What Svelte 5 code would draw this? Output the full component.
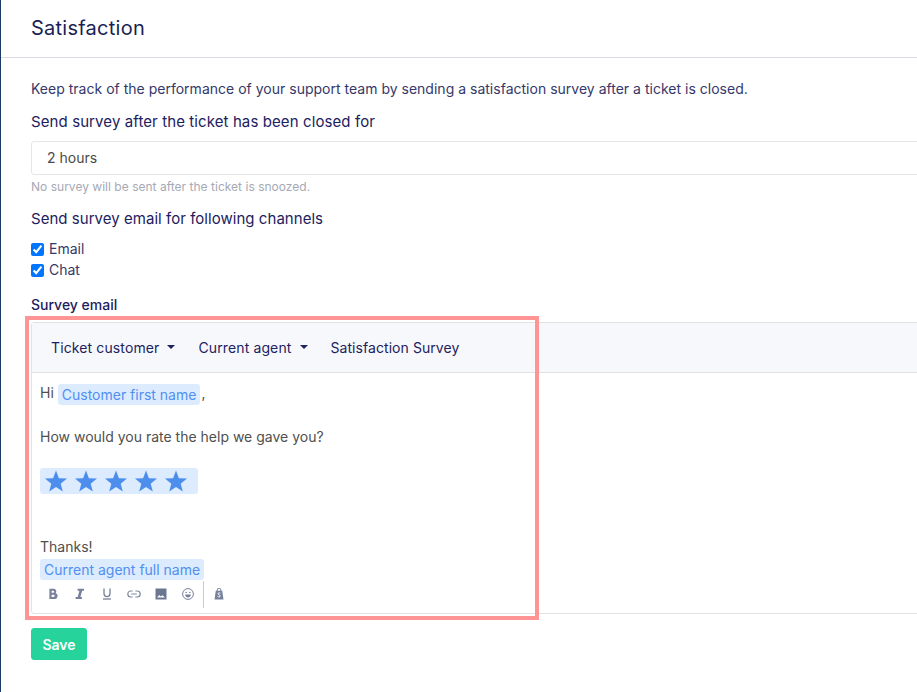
<script lang="ts">
  const channels = ['Email', 'Chat'];
  const stars = [1, 2, 3, 4, 5];
</script>

<div class="page">
  <header class="head"><h1>Satisfaction</h1></header>

  <main class="body">
    <p class="intro">Keep track of the performance of your support team by sending a satisfaction survey after a ticket is closed.</p>

    <div class="label first">Send survey after the ticket has been closed for</div>
    <div class="select">2 hours</div>
    <div class="hint">No survey will be sent after the ticket is snoozed.</div>

    <div class="label second">Send survey email for following channels</div>
    <div class="channels">
      {#each channels as c}
        <label class="check"><input type="checkbox" checked />{c}</label>
      {/each}
    </div>

    <div class="small-label">Survey email</div>

    <div class="editor-wrap">
      <div class="editor">
        <div class="toolbar">
          <span class="tab">Ticket customer<i class="caret"></i></span>
          <span class="tab">Current agent<i class="caret"></i></span>
          <span class="tab last">Satisfaction Survey</span>
        </div>
        <div class="content">
          <div class="line-hi">Hi <span class="tag hi-tag">Customer first name</span><span class="comma">,</span></div>
          <div class="line-q">How would you rate the help we gave you?</div>
          <div class="stars">
            {#each stars as s}
              <svg viewBox="0 0 24 24" width="24" height="24"><path d="M12 1.6l2.9 7.6 8.1.4-6.3 5.1 2.1 7.9L12 18.1l-6.8 4.5 2.1-7.9L1 9.6l8.1-.4z" fill="#4d8eed" /></svg>
            {/each}
          </div>
          <div class="thanks">Thanks!</div>
          <div class="line-agent"><span class="tag">Current agent full name</span></div>
          <div class="format">
            <svg class="fi" viewBox="0 0 12 12"><path d="M2.4 .8h4.2a2.6 2.6 0 0 1 1.9 4.5 2.9 2.9 0 0 1-1.5 5.6H2.4zM4.6 2.8v2h1.6a1 1 0 0 0 0-2zM4.6 6.7v2.2h2a1.1 1.1 0 0 0 0-2.2z" fill="#77819b" fill-rule="evenodd" /></svg>
            <svg class="fi" viewBox="0 0 12 12"><path d="M3.6 .8h6.4v2H8.1L6.4 9h1.5v2H1.6V9h2.1l1.7-6.2H3.6z" fill="#77819b" /></svg>
            <svg class="fi" viewBox="0 0 12 12"><path d="M3 .6v5a3 3 0 0 0 6 0v-5" fill="none" stroke="#77819b" stroke-width="1.3" /><path d="M2 11h8" stroke="#5f6a86" stroke-width="1.1" /></svg>
            <svg class="fi wide" viewBox="0 0 14 12"><path d="M5.6 3H3.8a3 3 0 0 0 0 6h1.8M8.4 3h1.8a3 3 0 0 1 0 6H8.4M4.2 6h5.6" fill="none" stroke="#7e88a0" stroke-width="1.2" /></svg>
            <svg class="fi" viewBox="0 0 12 12"><path d="M.5 .5h11v11H.5z" fill="#6b7690" /><path d="M2 9.6l2.3-2.6 1.6 1.5 1.5-1.3 2.6 2.4z" fill="#fff" /></svg>
            <svg class="fi" viewBox="0 0 12 12"><circle cx="6" cy="6" r="5.4" fill="none" stroke="#77819b" stroke-width="1" /><path d="M3.4 4.4h1.6M7 4.4h1.6" stroke="#77819b" stroke-width="1" /><path d="M3.2 6.6h5.6a2.8 2.8 0 0 1-5.6 0z" fill="#77819b" /></svg>
            <span class="sep"></span>
            <svg class="fi shop" viewBox="0 0 10 12"><path d="M1.8 2.8h6.4l1.3 8.7H.5z" fill="#77819b" /><path d="M3.2 3V2a1.8 1.8 0 0 1 3.6 0v1" fill="none" stroke="#77819b" stroke-width="1" /><path d="M6.4 5.2c-1-.7-2.4-.4-2.4.6 0 1.1 2.2 1 2.2 2.2 0 1-1.5 1.200-2.600.5" fill="none" stroke="#fff" stroke-width="1" /></svg>
          </div>
        </div>
      </div>
      <div class="highlight"></div>
    </div>

    <button class="save">Save</button>
  </main>
</div>

<style>
  :global(body) {
    margin: 0;
    background: #fff;
    overflow: hidden;
  }
  .page {
    width: 917px;
    height: 692px;
    box-sizing: border-box;
    border-left: 1px solid #1d3a63;
    font-family: Inter, 'Liberation Sans', sans-serif;
    color: #2a2a5e;
    overflow: hidden;
  }
  .head {
    height: 57px;
    box-sizing: content-box;
    border-bottom: 1px solid #d9dbe2;
    padding-left: 30px;
    display: flex;
    align-items: center;
  }
  h1 {
    margin: -1px 0 0;
    font-size: 20px;
    font-weight: 400;
    letter-spacing: 0.25px;
    color: #1a1f55;
  }
  .body {
    padding: 0 0 0 30px;
  }
  .intro {
    margin: 23px 0 0;
    font-size: 14px;
    line-height: 16px;
    letter-spacing: 0.01px;
    color: #34386a;
    white-space: nowrap;
  }
  .label {
    font-size: 15px;
    line-height: 18px;
    color: #1c2160;
  }
  .first {
    margin-top: 16px;
    letter-spacing: 0.1px;
  }
  .select {
    margin-top: 10px;
    width: 1000px;
    height: 34px;
    box-sizing: border-box;
    border: 1px solid #e5e6ea;
    border-radius: 3px;
    padding-left: 15px;
    font-size: 14px;
    line-height: 32px;
    color: #4a4a4a;
  }
  .hint {
    margin-top: 4px;
    font-size: 12px;
    line-height: 16px;
    letter-spacing: 0.02px;
    color: #a6a9b5;
  }
  .second {
    margin-top: 15px;
    letter-spacing: 0.04px;
  }
  .channels {
    margin-top: 12px;
    display: flex;
    flex-direction: column;
    gap: 3px;
  }
  .check {
    display: flex;
    align-items: center;
    font-size: 14px;
    line-height: 18px;
    color: #34386a;
  }
  .check input {
    margin: 0 5px 0 0;
    width: 13px;
    height: 13px;
    accent-color: #0075ff;
  }
  .small-label {
    margin-top: 17px;
    font-size: 14px;
    font-weight: 500;
    line-height: 17px;
    color: #1c2160;
  }
  .editor-wrap {
    position: relative;
    margin-top: 9px;
  }
  .editor {
    width: 1000px;
    height: 292px;
    box-sizing: border-box;
    border: 1px solid #e2e2e2;
    border-radius: 3px;
  }
  .toolbar {
    height: 50px;
    box-sizing: border-box;
    background: #f7f8fc;
    border-bottom: 1px solid #e2e2e2;
    padding-left: 19px;
    display: flex;
    align-items: center;
    gap: 23px;
  }
  .tab {
    display: flex;
    align-items: center;
    font-size: 14px;
    letter-spacing: 0.12px;
    color: #1c2160;
  }
  .tab.last {
    letter-spacing: 0.06px;
  }
  .caret {
    margin-left: 8px;
    border-left: 4px solid transparent;
    border-right: 4px solid transparent;
    border-top: 4px solid #1c2160;
    margin-top: -2px;
  }
  .content {
    padding: 0 8px;
    font-size: 14px;
    color: #4f4f4f;
  }
  .line-hi {
    margin-top: 10px;
    height: 22px;
    line-height: 20px;
  }
  .tag {
    display: inline-block;
    height: 21px;
    line-height: 22px;
    padding: 0 4px;
    background: #ddebff;
    color: #5090f0;
    border-radius: 3px;
  }
  .hi-tag {
    vertical-align: top;
    margin-top: 1px;
  }
  .comma {
    margin-left: 1px;
  }
  .line-q {
    margin-top: 22px;
    line-height: 20px;
  }
  .stars {
    margin-top: 21px;
    width: 158px;
    height: 26px;
    box-sizing: border-box;
    background: #ddebff;
    border-radius: 3px;
    padding-left: 4px;
    display: flex;
    align-items: center;
    gap: 6px;
  }
  .thanks {
    margin-top: 43px;
    line-height: 20px;
  }
  .line-agent {
    margin-top: 2px;
    height: 21px;
  }
  .format {
    margin-top: 1px;
    height: 27px;
    display: flex;
    align-items: center;
    padding-left: 7px;
    gap: 15px;
  }
  .fi {
    width: 12px;
    height: 12px;
    margin-top: -1px;
  }
  .fi.wide {
    width: 14px;
    margin: -1px -1px 0;
  }
  .sep {
    width: 1px;
    height: 27px;
    background: #c9ccd6;
    margin-left: -6px;
  }
  .fi.shop {
    width: 10px;
    margin-left: -5px;
  }
  .highlight {
    position: absolute;
    left: -6px;
    top: -6px;
    width: 514px;
    height: 304px;
    box-sizing: border-box;
    border: 4px solid #ff9494;
    pointer-events: none;
  }
  .save {
    display: block;
    margin-top: 14px;
    width: 56px;
    height: 32px;
    border: 1px solid #25d29a;
    border-radius: 3px;
    background: #26d39a;
    color: #fff;
    font-family: inherit;
    font-size: 14px;
    font-weight: 600;
    padding: 0;
  }
</style>
